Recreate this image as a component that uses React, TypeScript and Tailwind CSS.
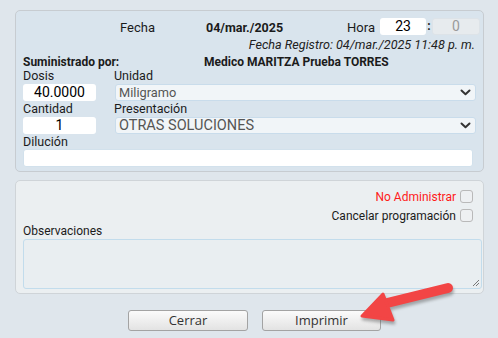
import React from "react";

const font = { fontFamily: "Roboto, 'Liberation Sans', sans-serif" };

function Chevron() {
  return (
    <svg width="11" height="7" viewBox="0 0 11 7" className="shrink-0">
      <path d="M1.5 1.5 L5.5 5.2 L9.5 1.5" fill="none" stroke="#333" strokeWidth="2" strokeLinecap="round" strokeLinejoin="round" />
    </svg>
  );
}

export default function App() {
  return (
    <div className="relative w-[498px] h-[338px] bg-[#dfe6ec] pt-[10px] px-[15px] text-[12px] text-[#1b1b1b] overflow-hidden" style={font}>
      {/* Panel 1 */}
      <div className="w-[469px] h-[162px] bg-[#d9e4ed] border border-[#c7ccd1] rounded-[5px] pt-[7px] pl-[7px] pr-[3px]">
        <div className="flex items-center h-[17px]">
          <div className="ml-[97px] w-[86px] leading-[17px] pt-[1px] text-[13px]">Fecha</div>
          <div className="font-bold leading-[17px] pt-[1px] text-[12.5px]">04/mar./2025</div>
          <div className="ml-auto flex items-center">
            <span className="mr-[5px] leading-[17px] pt-[1px] text-[13px]">Hora</span>
            <div className="w-[46px] h-[17px] bg-white rounded-[3px] text-center leading-[17px] text-[14px] text-black">23</div>
            <span className="w-[6px] text-center font-bold leading-[17px]">:</span>
            <div className="w-[48px] h-[17px] bg-[#e7ebee] border border-[#dde3e8] rounded-[3px] text-center leading-[15px] text-[14px] text-[#9a9a9a]">0</div>
          </div>
        </div>
        <div className="h-[16px] mt-[2px] text-right pr-[5px] italic leading-[16px] text-[12.6px] text-[#222]">
          Fecha Registro: 04/mar./2025 11:48 p. m.
        </div>
        <div className="flex h-[15px] mt-[2px] font-bold leading-[15px] text-[12px]">
          <div className="w-[181px]">Suministrado por:</div>
          <div>Medico MARITZA Prueba TORRES</div>
        </div>
        <div className="flex h-[15px] mt-[-2px] leading-[15px] text-[12.5px]">
          <div className="w-[91px]">Dosis</div>
          <div>Unidad</div>
        </div>
        <div className="flex h-[17px] mt-[1px]">
          <div className="w-[73px] h-[17px] bg-white rounded-[3px] text-center leading-[17px] text-[14px] text-black">40.0000</div>
          <div className="ml-[19px] w-[361px] h-[17px] bg-[#f1f5f8] border border-[#c9dceb] rounded-[3px] flex items-center justify-between pl-[3px] pr-[4px] text-[#555] text-[12.8px] leading-[15px]">
            <span>Miligramo</span>
            <Chevron />
          </div>
        </div>
        <div className="flex h-[15px] leading-[15px] text-[12.5px]">
          <div className="w-[91px]">Cantidad</div>
          <div>Presentación</div>
        </div>
        <div className="flex h-[17px] mt-[1px]">
          <div className="w-[73px] h-[17px] bg-white rounded-[3px] text-center leading-[17px] text-[14px] text-black">1</div>
          <div className="ml-[19px] w-[361px] h-[17px] bg-[#f1f5f8] border border-[#c9dceb] rounded-[3px] flex items-center justify-between pl-[3px] pr-[4px] text-[#555] text-[14.5px] leading-[15px]">
            <span>OTRAS SOLUCIONES</span>
            <Chevron />
          </div>
        </div>
        <div className="h-[15px] leading-[15px] text-[12.5px]">Dilución</div>
        <div className="w-[450px] h-[18px] bg-white border border-[#d2e1ec] rounded-[3px]"></div>
      </div>

      {/* Panel 2 */}
      <div className="mt-[8px] w-[469px] h-[114px] bg-[#ebeff1] border border-[#cfd4d8] rounded-[5px] pt-[9px] pl-[7px] pr-[1px]">
        <div className="flex justify-end items-center h-[13px] pr-[9px]">
          <span className="text-[#ff1a1a] mr-[4px] leading-[15px] pt-[1px]">No Administrar</span>
          <div className="w-[13px] h-[13px] bg-[#eef0f2] border border-[#b9b9b9] rounded-[3px]"></div>
        </div>
        <div className="flex justify-end items-center h-[13px] mt-[6px] pr-[9px]">
          <span className="mr-[4px] leading-[15px] pt-[1px]">Cancelar programación</span>
          <div className="w-[13px] h-[13px] bg-[#eef0f2] border border-[#b9b9b9] rounded-[3px]"></div>
        </div>
        <div className="h-[15px] mt-[2px] leading-[15px]">Observaciones</div>
        <div className="relative w-[459px] h-[50px] bg-[#e9eef1] border border-[#c2dcec] rounded-[3px]">
          <svg className="absolute right-[1px] bottom-[1px]" width="8" height="8" viewBox="0 0 8 8">
            <path d="M7 1 L1 7 M7 4 L4 7" stroke="#777" strokeWidth="1" />
          </svg>
        </div>
      </div>

      {/* Buttons */}
      <div className="flex mt-[16px] pl-[113px] gap-[14px]">
        <div className="w-[120px] h-[21px] border border-[#a3a3a3] rounded-[3px] bg-gradient-to-b from-[#fbfbfb] to-[#e3e3e3] text-center leading-[19px] text-[13px] text-[#333]" style={{ fontFamily: "'Open Sans', 'Liberation Sans', sans-serif" }}>Cerrar</div>
        <div className="w-[119px] h-[21px] border border-[#a3a3a3] rounded-[3px] bg-gradient-to-b from-[#fbfbfb] to-[#e3e3e3] text-center leading-[19px] text-[13px] text-[#333]" style={{ fontFamily: "'Open Sans', 'Liberation Sans', sans-serif" }}>Imprimir</div>
      </div>

      {/* Annotation arrow */}
      <svg className="absolute left-0 top-0 pointer-events-none" width="498" height="338" viewBox="0 0 498 338">
        <defs>
          <filter id="sh" x="-20%" y="-20%" width="140%" height="140%">
            <feGaussianBlur stdDeviation="1.5" />
          </filter>
        </defs>
        <g transform="translate(1,3)" opacity="0.45" filter="url(#sh)">
          <path d="M448 288 L379 305" stroke="#555" strokeWidth="10" strokeLinecap="round" />
          <path d="M362 316 L383 294 L393 320 Z" fill="#555" stroke="#555" strokeWidth="3" strokeLinejoin="round" />
        </g>
        <path d="M448 288 L379 305" stroke="#f24545" strokeWidth="10" strokeLinecap="round" />
        <path d="M362 316 L383 294 L393 320 Z" fill="#f24545" stroke="#f24545" strokeWidth="3" strokeLinejoin="round" />
      </svg>
    </div>
  );
}
